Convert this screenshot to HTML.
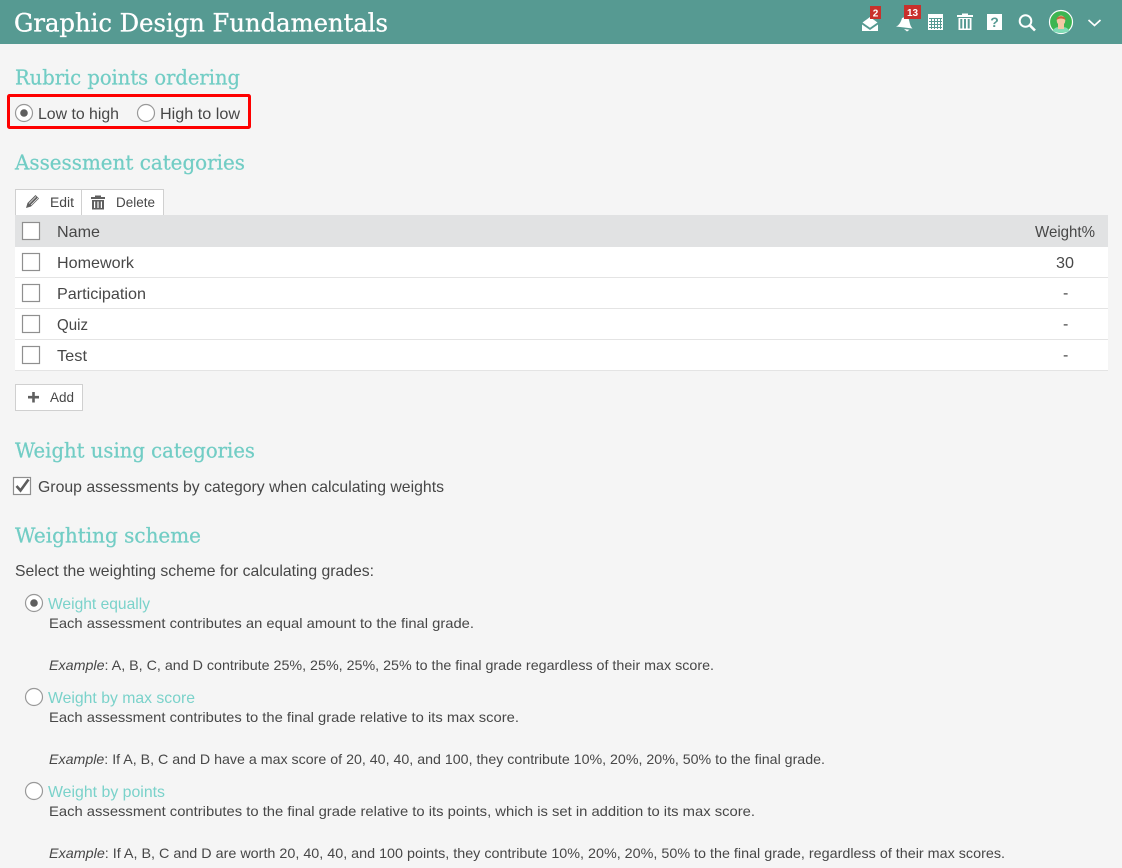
<!DOCTYPE html>
<html lang="en">
<head>
<meta charset="utf-8">
<title>Graphic Design Fundamentals</title>
<style>
html,body{margin:0;padding:0;background:#f5f5f5;width:1122px;height:868px;overflow:hidden}
svg{display:block}
text{font-family:"Liberation Sans",sans-serif;fill:#474747;white-space:pre}
.h{font-family:"DejaVu Serif","Liberation Serif",serif;font-size:20.500px;fill:#72cdc5;stroke:#72cdc5;stroke-width:.25}
.t{font-size:16px}
.s{font-size:14px}
.b{font-size:13.500px}
.l{font-size:16px;fill:#7ad2ca}
.r{fill:#fff;stroke:#999;stroke-width:1.200}
.c{fill:#fff;stroke:#8f8f8f;stroke-width:1.200}
.btn{fill:#fff;stroke:#d0d0d0;stroke-width:1}
.badge{font-size:10px;font-weight:bold;fill:#fff}
</style>
</head>
<body>
<svg width="1122" height="868" viewBox="0 0 1122 868" xmlns="http://www.w3.org/2000/svg">
<rect width="1122" height="868" fill="#f5f5f5"/>
<rect width="1122" height="44" fill="#569a92"/>
<text x="14" y="31.500" textLength="374" lengthAdjust="spacingAndGlyphs" style="font-family:'DejaVu Serif','Liberation Serif',serif;font-size:25px;fill:#fff;stroke:#fff;stroke-width:.35">Graphic Design Fundamentals</text>

<!-- header icons -->
<path d="M862 24.500 L870 30 L878 24.500 V31 H862 Z" fill="#fff"/>
<path d="M862.500 22.500 L870 17 L877.500 22.500 L870 27.800 Z" fill="#fff"/>
<rect x="870" y="6" width="11" height="13" fill="#c9302c"/>
<text x="875.500" y="16.500" class="badge" text-anchor="middle">2</text>

<path d="M896 26.500 C899 25.500 901 22 902 18 L908 16 L910 24 C910.500 26 911.500 27.500 912.500 28.500 Z" fill="#fff"/>
<path d="M904 29 L909.500 29.800 L907 31.500 Z" fill="#fff"/>
<rect x="904" y="5" width="17" height="14" fill="#c9302c"/>
<text x="912.500" y="16" class="badge" text-anchor="middle">13</text>

<g>
<rect x="928" y="14" width="15" height="16" fill="#fff"/>
<path d="M929 18.500H942M929 21.500H942M929 24.500H942M929 27.500H942M931.500 18V29M934.500 18V29M937.500 18V29M940.500 18V29" stroke="#569a92" stroke-width="1" fill="none"/>
</g>
<g>
<rect x="957" y="15" width="16" height="2" fill="#fff"/>
<rect x="962" y="13.500" width="6" height="2" fill="#fff"/>
<path d="M958.500 18H971.500V30H958.500Z M960.300 19V28.500H962.300V19Z M964 19V28.500H966V19Z M967.700 19V28.500H969.700V19Z" fill="#fff" fill-rule="evenodd"/>
</g>
<rect x="987" y="14" width="15" height="16" fill="#fff"/>
<text x="994.500" y="27" text-anchor="middle" style="font-size:14px;font-weight:bold;fill:#569a92">?</text>
<circle cx="1025.500" cy="21" r="5.800" fill="none" stroke="#fff" stroke-width="2"/>
<path d="M1029.800 25.300 L1035 30.500" stroke="#fff" stroke-width="2.600" fill="none"/>
<circle cx="1061" cy="22" r="11.500" fill="#3cb551" stroke="#fff" stroke-width="1.200"/>
<path d="M1053 31 C1054 27 1058 27 1061 27 C1064 27 1068 27 1069 31 C1066 33.500 1056 33.500 1053 31 Z" fill="#7fdcb6"/>
<rect x="1058" y="23" width="6" height="6" fill="#f2c9a5"/>
<ellipse cx="1061" cy="20.500" rx="4.300" ry="5" fill="#f2c9a5"/>
<path d="M1056.500 20 C1056 15 1066 15 1065.500 20 C1063 18 1059 18 1056.500 20 Z" fill="#c8663a"/>
<path d="M1088.500 20 L1094.500 25.500 L1100.500 20" stroke="#fff" stroke-width="1.700" fill="none"/>

<!-- Rubric -->
<text class="h" x="15" y="84.500" textLength="225" lengthAdjust="spacingAndGlyphs">Rubric points ordering</text>
<rect x="8.500" y="95.500" width="241" height="32" rx="1" fill="none" stroke="#fe0000" stroke-width="3"/>
<circle class="r" cx="24" cy="113" r="8.500"/><circle cx="24" cy="113" r="3.800" fill="#5f5f5f"/>
<text class="t" x="38" y="119" textLength="81" lengthAdjust="spacingAndGlyphs">Low to high</text>
<circle class="r" cx="146" cy="113" r="8.500"/>
<text class="t" x="160" y="119" textLength="80" lengthAdjust="spacingAndGlyphs">High to low</text>

<!-- Assessment -->
<text class="h" x="15" y="169.500" textLength="230" lengthAdjust="spacingAndGlyphs">Assessment categories</text>
<rect class="btn" x="15.500" y="189.500" width="148" height="26"/>
<path d="M81.500 189.500V215" stroke="#d0d0d0"/>
<path d="M26 208 L27.500 203 L35.500 195 L39 198.500 L31 206.500 Z" fill="#5f5f5f"/>
<path d="M29 203.500 L36 196.500M31 205 L38 198" stroke="#fff" stroke-width=".6" fill="none"/>
<text class="b" x="50" y="207" textLength="24" lengthAdjust="spacingAndGlyphs">Edit</text>
<rect x="91" y="197" width="14" height="2" fill="#5f5f5f"/>
<rect x="95" y="195.500" width="6" height="2" fill="#5f5f5f"/>
<path d="M92 200H104V209.500H92Z M94 201.500V208H95.200V201.500Z M97.400 201.500V208H98.600V201.500Z M100.800 201.500V208H102V201.500Z" fill="#5f5f5f" fill-rule="evenodd"/>
<text class="b" x="116" y="207" textLength="39" lengthAdjust="spacingAndGlyphs">Delete</text>

<rect x="15" y="215" width="1093" height="32" fill="#e1e2e3"/>
<rect x="15" y="247" width="1093" height="124" fill="#fff"/>
<path d="M15 277.500H1108M15 308.500H1108M15 339.500H1108M15 370.500H1108" stroke="#e4e4e4" fill="none"/>
<rect class="c" x="22.500" y="222.500" width="17" height="17"/>
<rect class="c" x="22.500" y="253.500" width="17" height="17"/>
<rect class="c" x="22.500" y="284.500" width="17" height="17"/>
<rect class="c" x="22.500" y="315.500" width="17" height="17"/>
<rect class="c" x="22.500" y="346.500" width="17" height="17"/>
<text class="t" x="57" y="237" textLength="43" lengthAdjust="spacingAndGlyphs">Name</text>
<text class="t" x="1035" y="237" textLength="60" lengthAdjust="spacingAndGlyphs">Weight%</text>
<text class="t" x="57" y="268" textLength="77" lengthAdjust="spacingAndGlyphs">Homework</text>
<text class="t" x="1056" y="268" textLength="18" lengthAdjust="spacingAndGlyphs">30</text>
<text class="t" x="57" y="299" textLength="89" lengthAdjust="spacingAndGlyphs">Participation</text>
<text class="t" x="1063" y="298">-</text>
<text class="t" x="57" y="330" textLength="31" lengthAdjust="spacingAndGlyphs">Quiz</text>
<text class="t" x="1063" y="329">-</text>
<text class="t" x="57" y="361" textLength="30" lengthAdjust="spacingAndGlyphs">Test</text>
<text class="t" x="1063" y="360">-</text>

<rect class="btn" x="15.500" y="384.500" width="67" height="26"/>
<path d="M33.500 392V402.500M28 397.200H39" stroke="#5f5f5f" stroke-width="2.600" fill="none"/>
<text class="b" x="50" y="402" textLength="24" lengthAdjust="spacingAndGlyphs">Add</text>

<!-- Weight using categories -->
<text class="h" x="15" y="457.500" textLength="240" lengthAdjust="spacingAndGlyphs">Weight using categories</text>
<rect class="c" x="13.500" y="477.500" width="17" height="17"/>
<path d="M16.500 486 L20.500 490.500 L28.500 479.500" stroke="#5f5f5f" stroke-width="2.600" fill="none"/>
<text class="t" x="38" y="492" textLength="406" lengthAdjust="spacingAndGlyphs">Group assessments by category when calculating weights</text>

<!-- Weighting scheme -->
<text class="h" x="15" y="542.500" textLength="186" lengthAdjust="spacingAndGlyphs">Weighting scheme</text>
<text class="t" x="15" y="576" textLength="359" lengthAdjust="spacingAndGlyphs">Select the weighting scheme for calculating grades:</text>

<circle class="r" cx="34" cy="603" r="8.500"/><circle cx="34" cy="603" r="3.800" fill="#5f5f5f"/>
<text class="l" x="48" y="609" textLength="102" lengthAdjust="spacingAndGlyphs">Weight equally</text>
<text class="s" x="49" y="628" textLength="425" lengthAdjust="spacingAndGlyphs">Each assessment contributes an equal amount to the final grade.</text>
<text class="s" x="49" y="670" textLength="665" lengthAdjust="spacingAndGlyphs"><tspan font-style="italic">Example</tspan>: A, B, C, and D contribute 25%, 25%, 25%, 25% to the final grade regardless of their max score.</text>

<circle class="r" cx="34" cy="697" r="8.500"/>
<text class="l" x="48" y="703" textLength="147" lengthAdjust="spacingAndGlyphs">Weight by max score</text>
<text class="s" x="49" y="722" textLength="470" lengthAdjust="spacingAndGlyphs">Each assessment contributes to the final grade relative to its max score.</text>
<text class="s" x="49" y="764" textLength="776" lengthAdjust="spacingAndGlyphs"><tspan font-style="italic">Example</tspan>: If A, B, C and D have a max score of 20, 40, 40, and 100, they contribute 10%, 20%, 20%, 50% to the final grade.</text>

<circle class="r" cx="34" cy="791" r="8.500"/>
<text class="l" x="48" y="797" textLength="117" lengthAdjust="spacingAndGlyphs">Weight by points</text>
<text class="s" x="49" y="816" textLength="706" lengthAdjust="spacingAndGlyphs">Each assessment contributes to the final grade relative to its points, which is set in addition to its max score.</text>
<text class="s" x="49" y="858" textLength="956" lengthAdjust="spacingAndGlyphs"><tspan font-style="italic">Example</tspan>: If A, B, C and D are worth 20, 40, 40, and 100 points, they contribute 10%, 20%, 20%, 50% to the final grade, regardless of their max scores.</text>
</svg>
</body>
</html>
